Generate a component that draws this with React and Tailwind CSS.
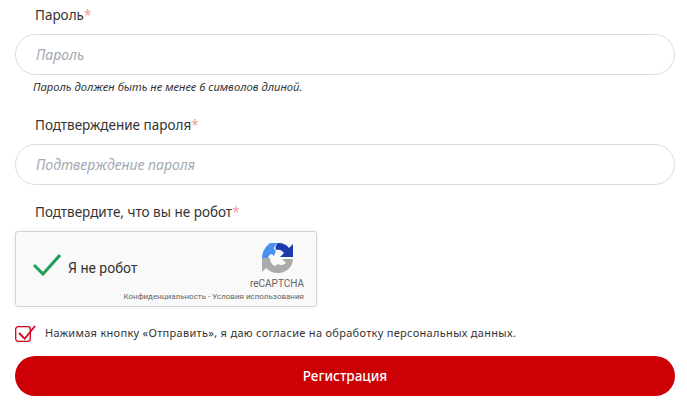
import React from "react";

const font = "font-['Noto_Sans',sans-serif]";

function Field({ label, placeholder, hint }) {
  return (
    <div>
      <div className="h-[34px] pl-5 pt-[5px] text-[13.5px] leading-5 text-[#333]">
        {label}
        <span className="text-[#f29a9a]">*</span>
      </div>
      <div className="flex h-[41px] items-center rounded-full border border-[#d9dcdf] bg-white pl-5 text-[14px] italic text-[#a3a9b2]">
        {placeholder}
      </div>
      {hint && (
        <div className="mt-[5px] pl-[18px] text-[11.2px] italic leading-[14px] text-[#333]">
          {hint}
        </div>
      )}
    </div>
  );
}

function RecaptchaLogo() {
  return (
    <svg width="32" height="32" viewBox="0 0 32 32">
      <path d="M8 1 L16 1 C13 3 12 5 12 7 L14 9 L12 14 C10 11 7 12 6 16 L0 16 C0 10 3 5 8 1 Z" fill="#4a90f2" />
      <path d="M16 1 C21 1 25 3 27 6 L31 2 L31 15 L18 15 L22 11 C20 8 17 7 14 8 C13 5 14 3 16 1 Z" fill="#1c3aa9" />
      <path d="M0 16 L8 16 C8 20 10 23 13 24 L16 22 C19 24 21 23 24 21 L20 17 L31 17 C31 24 25 31 16 31 C11 31 7 29 4 26 L0 30 Z" fill="#ababab" />
    </svg>
  );
}

export default function App() {
  return (
    <div className={`h-[403px] w-[687px] overflow-hidden bg-white px-[15px] pr-3 ${font}`}>
      <Field label="Пароль" placeholder="Пароль" hint="Пароль должен быть не менее 6 символов длиной." />
      <div className="mt-4">
        <Field label="Подтверждение пароля" placeholder="Подтверждение пароля" />
      </div>
      <div className="h-[46px] pl-5 pt-[17px] text-[13.5px] leading-5 text-[#333]">
        Подтвердите, что вы не робот<span className="text-[#f29a9a]">*</span>
      </div>
      <div className="relative h-[76px] w-[302px] rounded-[3px] border border-[#d3d3d3] bg-[#f9f9f9] font-['Roboto',sans-serif] shadow-[0_0_4px_rgba(0,0,0,0.08)]">
        <div className="flex h-[72px] items-center pl-[17px]">
          <svg width="28" height="22" viewBox="0 0 28 22" fill="none" className="mb-[7px]">
            <path d="M1 11 L10 20 L27 1" stroke="#1e9e58" strokeWidth="3" />
          </svg>
          <span className="ml-[7px] text-[14px] text-[#333]">Я не робот</span>
        </div>
        <div className="absolute left-[246px] top-[10px]">
          <RecaptchaLogo />
        </div>
        <div className="absolute right-[12px] top-[46px] text-[10px] leading-3 text-[#666]">reCAPTCHA</div>
        <div className="absolute right-[12px] top-[60px] text-[8px] leading-[10px] text-[#666]">
          Конфиденциальность - Условия использования
        </div>
      </div>
      <div className="mt-[18px] flex h-[18px] items-center">
        <svg width="21" height="18" viewBox="0 0 21 18" fill="none">
          <rect x="0.7" y="1.7" width="14.6" height="14.6" rx="2.5" stroke="#d0021b" strokeWidth="1.3" />
          <path d="M4 8 L9.7 13.7 L20 1" stroke="#d0021b" strokeWidth="1.8" />
        </svg>
        <span className="ml-[9px] pb-[2px] text-[11px] tracking-[0.3px] text-[#333]">
          Нажимая кнопку «Отправить», я даю согласие на обработку персональных данных.
        </span>
      </div>
      <button className="mt-[13px] flex h-10 w-[660px] items-center justify-center rounded-full bg-[#cc0005] text-[13.5px] font-medium text-white">
        Регистрация
      </button>
    </div>
  );
}
